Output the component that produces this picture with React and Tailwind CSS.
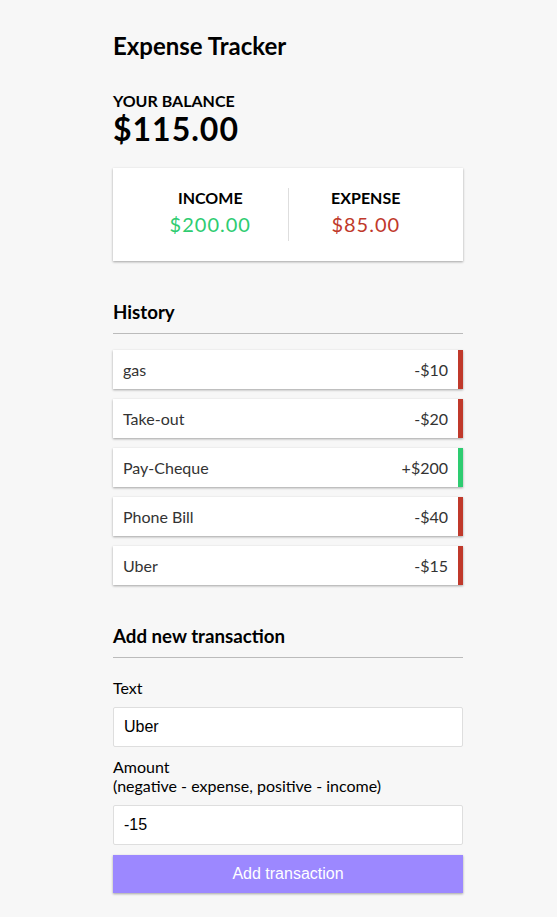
import { useState } from 'react'

const shadow = 'shadow-[0_1px_3px_rgba(0,0,0,0.12),0_1px_2px_rgba(0,0,0,0.24)]'

const initial = [
  { id: 1, text: 'gas', amount: -10 },
  { id: 2, text: 'Take-out', amount: -20 },
  { id: 3, text: 'Pay-Cheque', amount: 200 },
  { id: 4, text: 'Phone Bill', amount: -40 },
  { id: 5, text: 'Uber', amount: -15 },
]

function Item({ t }) {
  const sign = t.amount < 0 ? '-' : '+'
  return (
    <li
      className={`flex justify-between bg-white p-[10px] text-base leading-[19px] text-[#333] ${shadow} ${
        t.amount < 0 ? 'border-r-[5px] border-[#c0392b]' : 'border-r-[5px] border-[#2ecc71]'
      }`}
    >
      {t.text} <span>{sign}${Math.abs(t.amount)}</span>
    </li>
  )
}

export default function App() {
  const [transactions] = useState(initial)
  const [text, setText] = useState('Uber')
  const [amount, setAmount] = useState('-15')

  const amounts = transactions.map(t => t.amount)
  const total = amounts.reduce((s, a) => s + a, 0).toFixed(2)
  const income = amounts.filter(a => a > 0).reduce((s, a) => s + a, 0).toFixed(2)
  const expense = (amounts.filter(a => a < 0).reduce((s, a) => s + a, 0) * -1).toFixed(2)

  return (
    <div className="min-h-screen bg-[#f7f7f7] font-['Lato',sans-serif] text-black">
      <div className="ml-[113px] w-[350px] pt-[31px] pb-[30px]">
        <h2 className="text-2xl font-bold leading-[29px]">Expense Tracker</h2>

        <h4 className="mt-[31px] text-base font-bold uppercase leading-[19px]">Your Balance</h4>
        <h1 className="text-[32px] font-bold leading-[38px] tracking-[1px]">${total}</h1>

        {/* Ingresos / gastos */}
        <div className={`my-5 flex justify-between bg-white p-5 ${shadow}`}>
          <div className="flex-1 border-r border-[#dedede] text-center">
            <h4 className="text-base font-bold uppercase leading-[19px]">Income</h4>
            <p className="my-[5px] text-xl leading-6 tracking-[1px] text-[#2ecc71]">${income}</p>
          </div>
          <div className="flex-1 text-center">
            <h4 className="text-base font-bold uppercase leading-[19px]">Expense</h4>
            <p className="my-[5px] text-xl leading-6 tracking-[1px] text-[#c0392b]">${expense}</p>
          </div>
        </div>

        <h3 className="mt-10 border-b border-[#bbb] pb-[10px] text-[18.72px] font-bold leading-[22px]">History</h3>
        <ul className="mt-4 mb-10 flex flex-col gap-[10px]">
          {transactions.map(t => <Item key={t.id} t={t} />)}
        </ul>

        <h3 className="mt-10 border-b border-[#bbb] pb-[10px] text-[18.72px] font-bold leading-[22px]">Add new transaction</h3>
        <form className="mt-[10px]" onSubmit={e => e.preventDefault()}>
          <div>
            <label className="my-[10px] inline-block leading-[19px]">Text</label>
            <input
              type="text"
              value={text}
              onChange={e => setText(e.target.value)}
              placeholder="Enter text..."
              className="block h-10 w-full rounded-[2px] border border-[#dedede] bg-white p-[10px] font-['Liberation_Sans',Arial,sans-serif] text-base"
            />
          </div>
          <div>
            <label className="my-[10px] inline-block leading-[19px]">
              Amount <br />
              (negative - expense, positive - income)
            </label>
            <input
              type="text"
              value={amount}
              onChange={e => setAmount(e.target.value)}
              placeholder="Enter amount..."
              className="block h-10 w-full rounded-[2px] border border-[#dedede] bg-white p-[10px] font-['Liberation_Sans',Arial,sans-serif] text-base"
            />
          </div>
          <button
            className={`mt-[10px] mb-[30px] block h-[38px] w-full bg-[#9c88ff] font-['Liberation_Sans',Arial,sans-serif] text-base text-white ${shadow}`}
          >
            Add transaction
          </button>
        </form>
      </div>
    </div>
  )
}
